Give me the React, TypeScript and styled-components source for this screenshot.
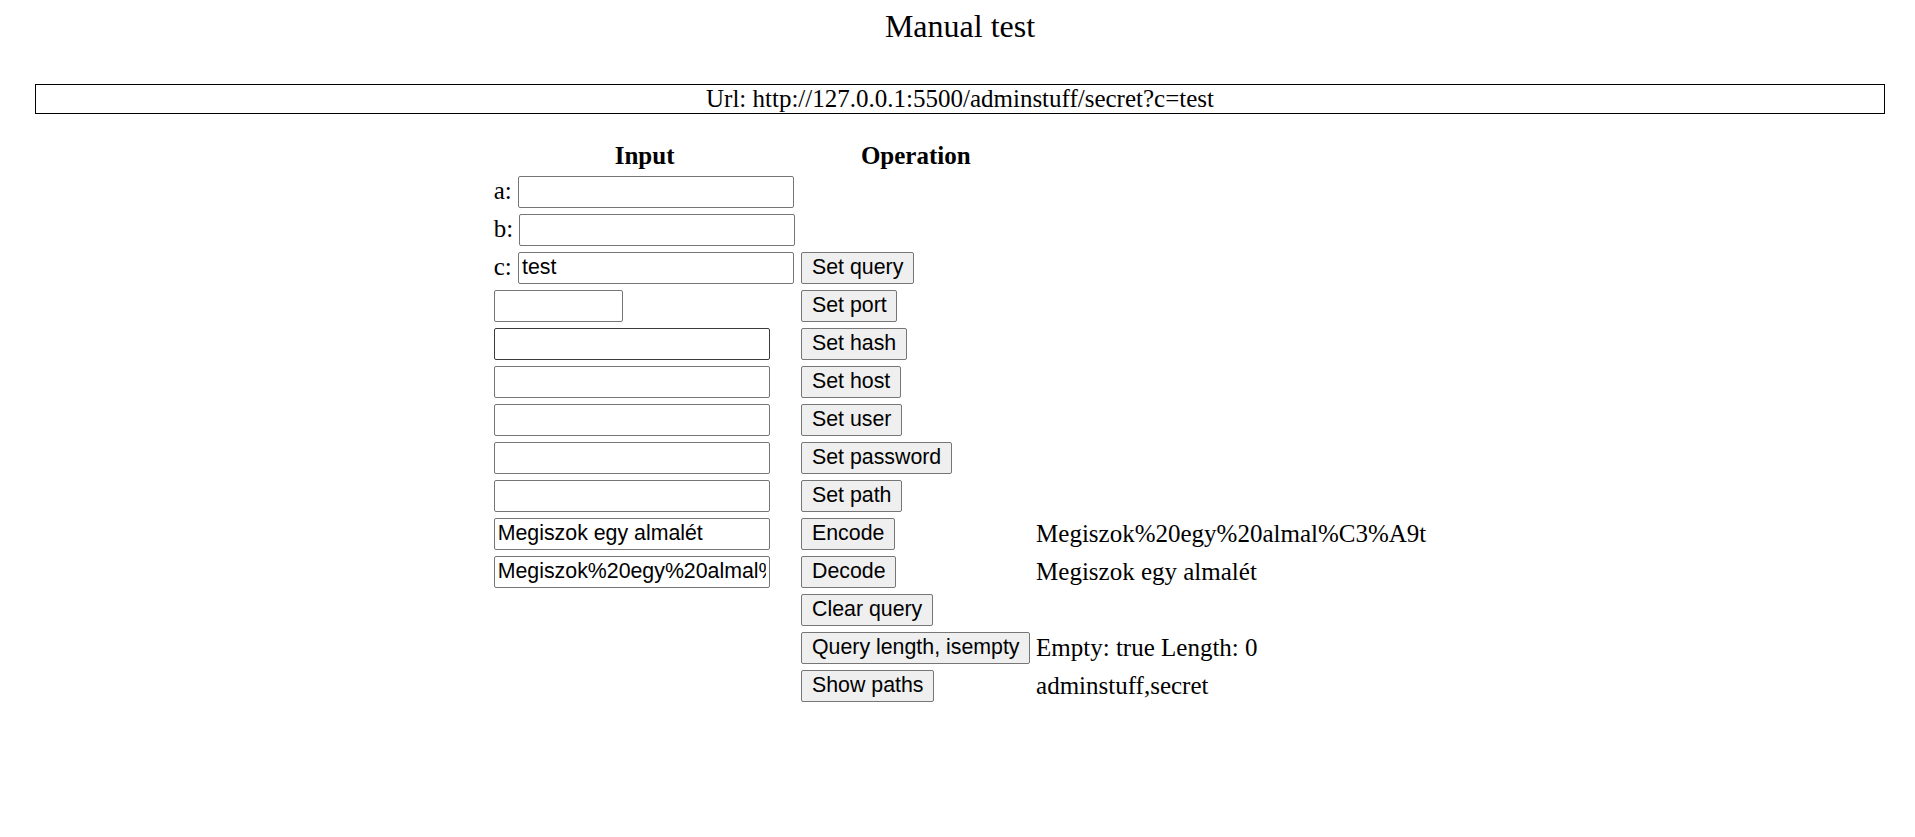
import { createGlobalStyle } from 'styled-components'
import styled from 'styled-components'

const GlobalStyle = createGlobalStyle`
    body {
        margin: 0;
        background: #ffffff;
        color: #000000;
        font-family: 'Liberation Serif', 'Times New Roman', serif;
        font-size: 25px;
    }
`

type InputRow = {
    label?: string
    value?: string
    width?: number
    dark?: boolean
    action?: string
    result?: string
}

const rows: InputRow[] = [
    { label: 'a:' },
    { label: 'b:' },
    { label: 'c:', value: 'test', action: 'Set query' },
    { width: 129, action: 'Set port' },
    { dark: true, action: 'Set hash' },
    { action: 'Set host' },
    { action: 'Set user' },
    { action: 'Set password' },
    { action: 'Set path' },
    {
        value: 'Megiszok egy almalét',
        action: 'Encode',
        result: 'Megiszok%20egy%20almal%C3%A9t',
    },
    {
        value: 'Megiszok%20egy%20almal%C3%A9t',
        action: 'Decode',
        result: 'Megiszok egy almalét',
    },
]

const buttonRows = [
    { action: 'Clear query' },
    { action: 'Query length, isempty', result: 'Empty: true Length: 0' },
    { action: 'Show paths', result: 'adminstuff,secret' },
]

const App = () => {
    return (
        <>
            <GlobalStyle />
            <Page>
                <Title>Manual test</Title>
                <UrlBox>Url: http://127.0.0.1:5500/adminstuff/secret?c=test</UrlBox>
                <TestTable>
                    <thead>
                        <tr>
                            <HeadCell>Input</HeadCell>
                            <HeadCell>Operation</HeadCell>
                            <Cell />
                        </tr>
                    </thead>
                    <tbody>
                        {rows.map((row, i) => (
                            <tr key={i}>
                                <Cell>
                                    {row.label && `${row.label} `}
                                    <TextInput
                                        $width={row.width}
                                        $dark={row.dark}
                                        defaultValue={row.value || ''}
                                        type='text'
                                    />
                                </Cell>
                                <Cell>
                                    {row.action && (
                                        <ActionButton type='button'>
                                            {row.action}
                                        </ActionButton>
                                    )}
                                </Cell>
                                <Cell>{row.result}</Cell>
                            </tr>
                        ))}
                        {buttonRows.map((row, i) => (
                            <tr key={`b${i}`}>
                                <Cell />
                                <Cell>
                                    <ActionButton type='button'>
                                        {row.action}
                                    </ActionButton>
                                </Cell>
                                <Cell>{row.result}</Cell>
                            </tr>
                        ))}
                    </tbody>
                </TestTable>
            </Page>
        </>
    )
}

export default App

const Page = styled.div`
    padding: 8px 30px 40px 35px;
`

const Title = styled.div`
    font-size: 32px;
    text-align: center;
`

const UrlBox = styled.div`
    margin-top: 39px;
    border: 1px solid #000000;
    text-align: center;
    line-height: 28px;
`

const TestTable = styled.table`
    margin: 23px auto 0 auto;
    border-spacing: 3px;
    font-size: 25px;
`

const HeadCell = styled.th`
    padding: 1.5px;
    font-weight: 700;
    text-align: center;
`

const Cell = styled.td`
    padding: 1.5px;
    white-space: nowrap;
`

const TextInput = styled.input<{ $width?: number; $dark?: boolean }>`
    box-sizing: border-box;
    width: ${props => props.$width || 276}px;
    height: 32px;
    margin: 0;
    padding: 1px 3px;
    border: 1px solid ${props => (props.$dark ? '#3b3b3b' : '#767676')};
    border-radius: 2px;
    background: #ffffff;
    color: #000000;
    font-family: 'Liberation Sans', Arial, sans-serif;
    font-size: 21.33px;
    outline: none;
`

const ActionButton = styled.button`
    box-sizing: border-box;
    height: 32px;
    margin: 0;
    padding: 0 9.6px;
    border: 1px solid #767676;
    border-radius: 2px;
    background: #efefef;
    color: #000000;
    font-family: 'Liberation Sans', Arial, sans-serif;
    font-size: 21.33px;
    cursor: pointer;
`
